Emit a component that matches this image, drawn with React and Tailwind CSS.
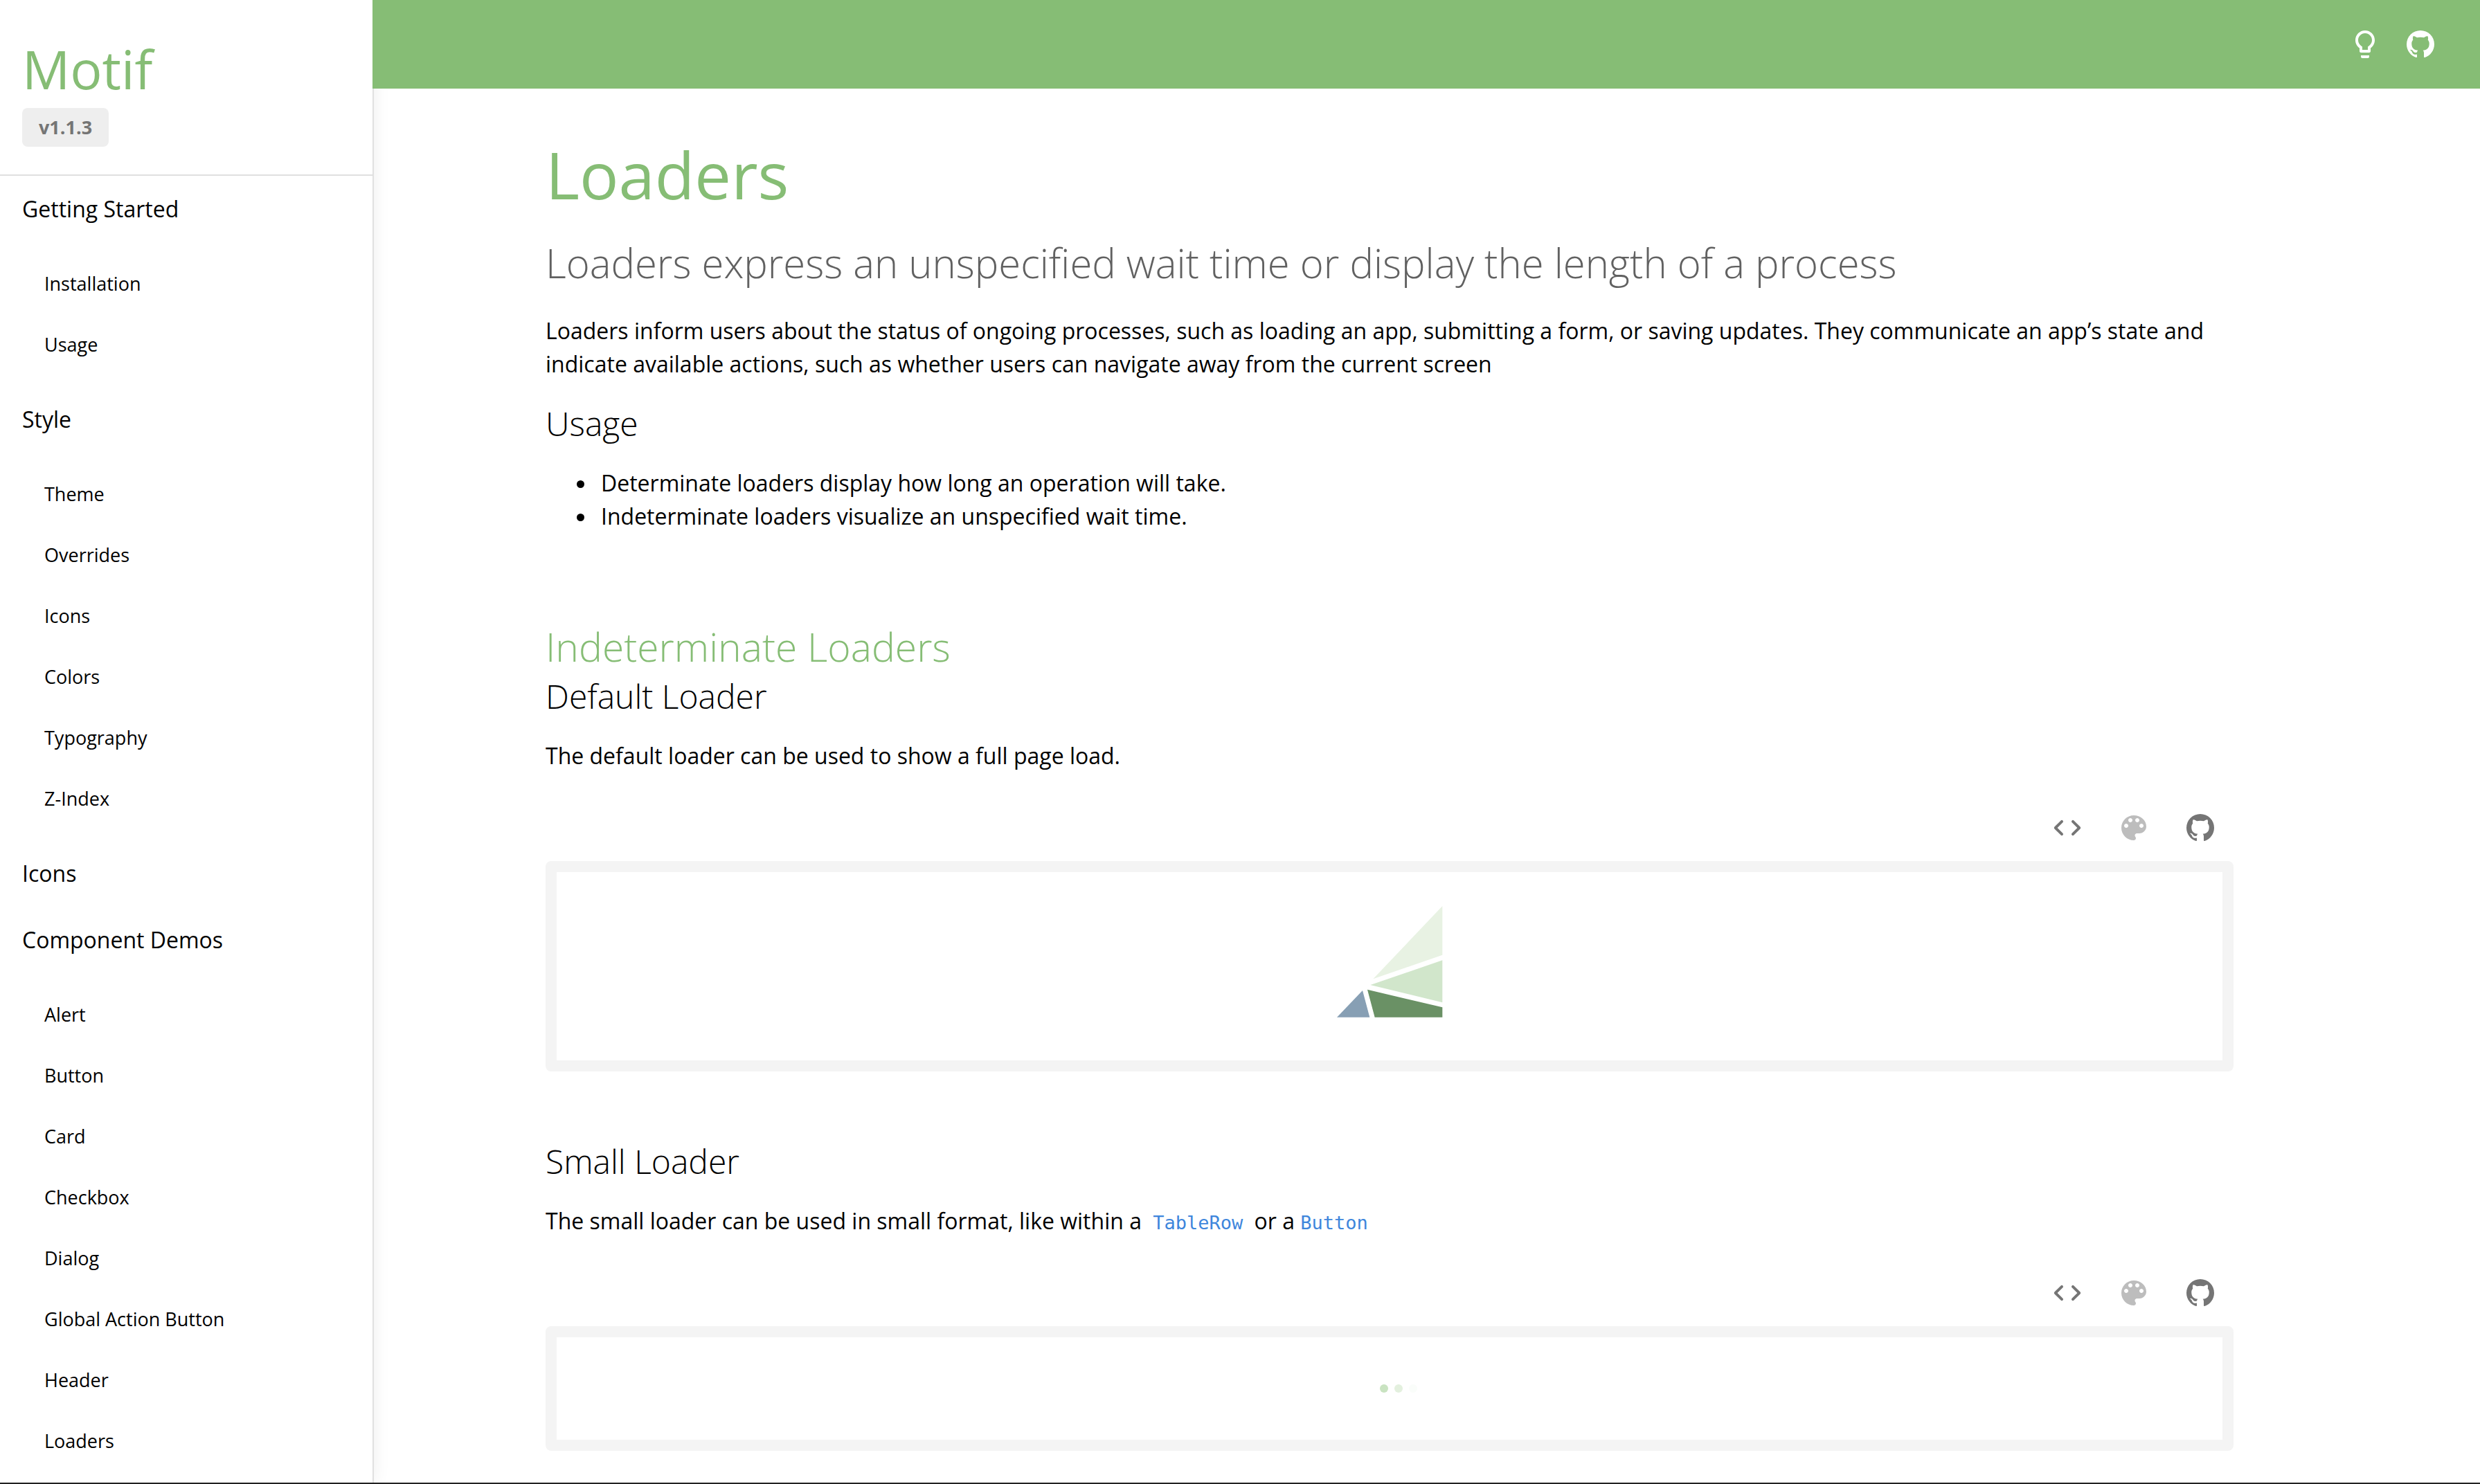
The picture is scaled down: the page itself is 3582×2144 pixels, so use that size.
import React from 'react';

const ICONS = {
  bulb: 'M9 21c0 .55.45 1 1 1h4c.55 0 1-.45 1-1v-1H9v1zm3-19C8.14 2 5 5.14 5 9c0 2.38 1.19 4.47 3 5.74V17c0 .55.45 1 1 1h6c.55 0 1-.45 1-1v-2.26c1.81-1.27 3-3.36 3-5.74 0-3.86-3.14-7-7-7zm2.85 11.1-.85.6V16h-4v-2.3l-.85-.6C7.8 12.16 7 10.63 7 9c0-2.76 2.24-5 5-5s5 2.24 5 5c0 1.63-.8 3.16-2.15 4.1z',
  github: 'M12,2A10,10 0 0,0 2,12C2,16.42 4.87,20.17 8.84,21.5C9.34,21.58 9.5,21.27 9.5,21C9.5,20.77 9.5,20.14 9.5,19.31C6.73,19.91 6.14,17.97 6.14,17.97C5.68,16.81 5.03,16.5 5.03,16.5C4.12,15.88 5.1,15.9 5.1,15.9C6.1,15.97 6.63,16.93 6.63,16.93C7.5,18.45 8.97,18 9.54,17.76C9.63,17.11 9.89,16.67 10.17,16.42C7.95,16.17 5.62,15.31 5.62,11.5C5.62,10.39 6,9.5 6.65,8.79C6.55,8.54 6.2,7.5 6.75,6.15C6.75,6.15 7.59,5.88 9.5,7.17C10.29,6.95 11.15,6.84 12,6.84C12.85,6.84 13.71,6.95 14.5,7.17C16.41,5.88 17.25,6.15 17.25,6.15C17.8,7.5 17.45,8.54 17.35,8.79C18,9.5 18.38,10.39 18.38,11.5C18.38,15.32 16.04,16.16 13.81,16.41C14.17,16.72 14.5,17.33 14.5,18.26C14.5,19.6 14.5,20.68 14.5,21C14.5,21.27 14.66,21.59 15.17,21.5C19.14,20.16 22,16.42 22,12A10,10 0 0,0 12,2Z',
  code: 'M8.7 15.9 4.8 12l3.9-3.9c.39-.39.39-1.01 0-1.4s-1.01-.39-1.4 0l-4.59 4.59c-.39.39-.39 1.02 0 1.41l4.59 4.6c.39.39 1.01.39 1.4 0s.39-1.01 0-1.4m6.6 0 3.9-3.9-3.9-3.9c-.39-.39-.39-1.01 0-1.4s1.01-.39 1.4 0l4.59 4.59c.39.39.39 1.02 0 1.41l-4.59 4.6c-.39.39-1.01.39-1.4 0s-.39-1.01 0-1.4',
  palette: 'M12 3c-4.97 0-9 4.03-9 9s4.03 9 9 9c.83 0 1.5-.67 1.5-1.5 0-.39-.15-.74-.39-1.01-.23-.26-.38-.61-.38-.99 0-.83.67-1.5 1.5-1.5H16c2.76 0 5-2.24 5-5 0-4.42-4.03-8-9-8zm-5.5 9c-.83 0-1.5-.67-1.5-1.5S5.67 9 6.5 9 8 9.67 8 10.5 7.33 12 6.5 12zm3-4C8.67 8 8 7.33 8 6.5S8.67 5 9.5 5s1.5.67 1.5 1.5S10.33 8 9.5 8zm5 0c-.83 0-1.5-.67-1.5-1.5S13.67 5 14.5 5s1.5.67 1.5 1.5S15.33 8 14.5 8zm3 4c-.83 0-1.5-.67-1.5-1.5S16.67 9 17.5 9s1.5.67 1.5 1.5-.67 1.5-1.5 1.5z',
};

const NAV = [
  { title: 'Getting Started', items: ['Installation', 'Usage'] },
  { title: 'Style', items: ['Theme', 'Overrides', 'Icons', 'Colors', 'Typography', 'Z-Index'] },
  { title: 'Icons', items: [] },
  {
    title: 'Component Demos',
    items: ['Alert', 'Button', 'Card', 'Checkbox', 'Dialog', 'Global Action Button', 'Header', 'Loaders'],
  },
];

function Icon({ name }) {
  return (
    <svg className="size-12 fill-current" viewBox="0 0 24 24" aria-hidden="true">
      <path d={ICONS[name]} />
    </svg>
  );
}

function Sidebar() {
  return (
    <aside className="w-[540px] shrink-0 border-r-2 border-[#e0e0e0] bg-white shadow-[0_0_24px_rgba(0,0,0,0.07)]">
      <div className="border-b-2 border-[#e0e0e0] px-8 pt-[52px] pb-10">
        <a href="#home" className="block text-[77px] leading-[96px] text-[#86bd75]">Motif</a>
        <span className="mt-2 inline-block rounded-lg bg-[#eeeeee] px-6 align-top text-[27px] leading-[56px] font-bold text-[#757575]">
          v1.1.3
        </span>
      </div>
      <nav aria-label="Documentation">
        {NAV.map((group) => (
          <section key={group.title}>
            <a href="#section" className="block px-8 py-6 text-[32px] leading-[48px]">{group.title}</a>
            {group.items.length > 0 && (
              <ul className="py-4">
                {group.items.map((item) => (
                  <li key={item}>
                    <a href="#page" className="block px-16 py-6 text-[27px] leading-[40px]">{item}</a>
                  </li>
                ))}
              </ul>
            )}
          </section>
        ))}
      </nav>
    </aside>
  );
}

function CodeLink({ href, className, children }) {
  return (
    <a href={href} className={`font-['DejaVu_Sans_Mono',monospace] text-[27px] leading-none text-[#3e86dc] ${className}`}>
      {children}
    </a>
  );
}

function Demo({ title, children, description }) {
  return (
    <section>
      <h3 className="text-[48px] leading-[68px] font-light">{title}</h3>
      <p className="mt-7">{description}</p>
      <div className="mt-8 flex justify-end text-[#757575]">
        <button type="button" aria-label="Show code" className="p-6"><Icon name="code" /></button>
        <button type="button" aria-label="Edit theme" disabled className="p-6 text-[#bdbdbd]"><Icon name="palette" /></button>
        <button type="button" aria-label="View on GitHub" className="p-6"><Icon name="github" /></button>
      </div>
      <div className="flex justify-center rounded-lg border-16 border-[#f4f4f4]">{children}</div>
    </section>
  );
}

export default function App() {
  return (
    <div className="flex min-h-screen border-b-2 border-[#222222] bg-white font-['Open_Sans',sans-serif] text-[32px] leading-[48px] text-black">
      <Sidebar />
      <div className="min-w-0 flex-1">
        <header className="relative z-10 -ml-0.5 flex h-32 items-center justify-end bg-[#86bd75] pr-[46px] text-white">
          <button type="button" aria-label="Toggle theme" className="p-4"><Icon name="bulb" /></button>
          <a href="#github" aria-label="GitHub" className="p-4"><Icon name="github" /></a>
        </header>
        <main className="pt-[60px] pr-[356px] pl-[248px]">
          <h1 className="text-[94px] leading-[128px] text-[#86bd75]">Loaders</h1>
          <p className="mt-6 text-[58px] leading-[80px] font-light text-[#616161]">
            Loaders express an unspecified wait time or display the length of a process
          </p>
          <p className="mt-[34px]">
            Loaders inform users about the status of ongoing processes, such as loading an app, submitting a form, or
            saving updates. They communicate an app’s state and indicate available actions, such as whether users can
            navigate away from the current screen
          </p>
          <h3 className="mt-7 text-[48px] leading-[68px] font-light">Usage</h3>
          <ul className="mt-7 list-disc pl-[74px]">
            <li className="pl-1.5">Determinate loaders display how long an operation will take.</li>
            <li className="pl-1.5">Indeterminate loaders visualize an unspecified wait time.</li>
          </ul>

          <h2 className="mt-[126px] text-[57px] leading-[76px] font-light text-[#86bd75]">Indeterminate Loaders</h2>
          <Demo title="Default Loader" description="The default loader can be used to show a full page load.">
            <svg className="mt-[49px] mb-[62px] h-[161px] w-[153px]" viewBox="0 0 459 483" role="img" aria-label="Loading">
              <path d="M457 0V212L157 316Z" fill="#e8f2e3" />
              <path d="M457 235V418L145 342Z" fill="#d1e6cb" />
              <path d="M132 362L457 439V482H164Z" fill="#6a9165" />
              <path d="M111 366L142 482H0Z" fill="#879fb4" />
            </svg>
          </Demo>
          <div className="mt-24">
            <Demo
              title="Small Loader"
              description={
                <>
                  The small loader can be used in small format, like within a{' '}
                  <CodeLink href="#tablerow" className="px-2">TableRow</CodeLink> or a{' '}
                  <CodeLink href="#button">Button</CodeLink>
                </>
              }
            >
              <div className="flex gap-[9px] py-[68px] pl-1" role="img" aria-label="Loading">
                <span className="size-3" />
                <span className="size-3 rounded-full bg-[#c9e3c1]" />
                <span className="size-3 rounded-full bg-[#e3f0de]" />
                <span className="size-3 rounded-full bg-[#fafdfa]" />
              </div>
            </Demo>
          </div>
        </main>
      </div>
    </div>
  );
}
